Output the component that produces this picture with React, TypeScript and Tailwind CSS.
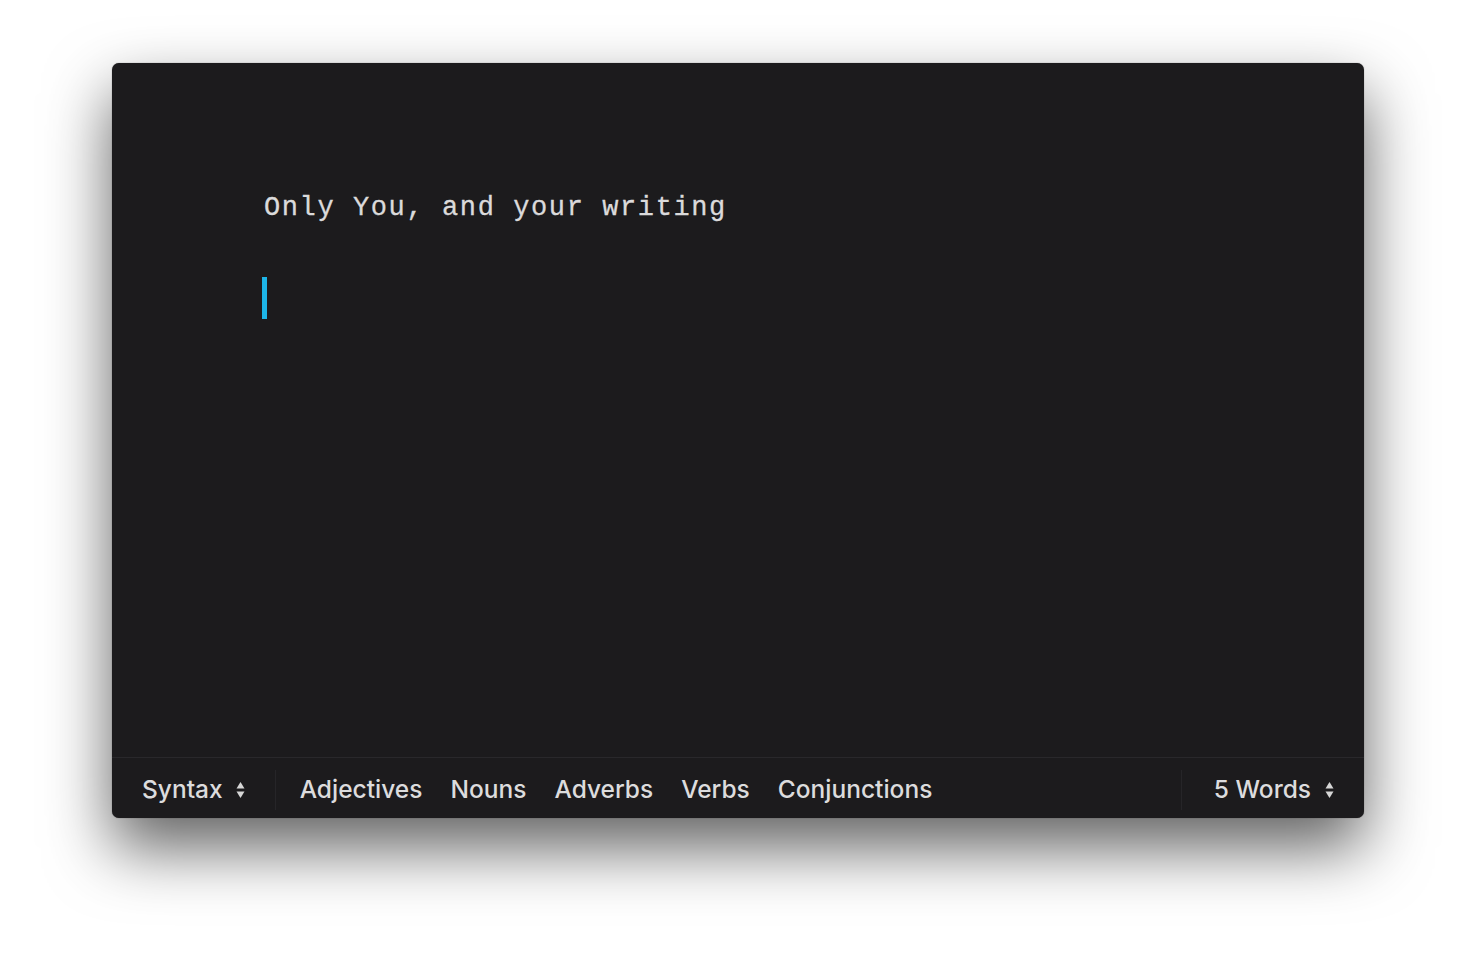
const mono = { fontFamily: '"Liberation Mono", "DejaVu Sans Mono", monospace' };

function UpDown() {
  return (
    <svg width="9" height="18" viewBox="0 0 9 18" className="fill-[#d6d6d6]">
      <path d="M4.5 1 L8.5 7.5 L0.5 7.5 Z" />
      <path d="M4.5 17 L8.5 10.5 L0.5 10.5 Z" />
    </svg>
  );
}

export default function App() {
  const tags = ["Adjectives", "Nouns", "Adverbs", "Verbs", "Conjunctions"];
  return (
    <div className="w-[1476px] h-[978px] bg-white flex justify-center pt-[63px]">
      <div className="w-[1252px] h-[755px] rounded-[7px] bg-[#1c1b1d] flex flex-col overflow-hidden shadow-[0_30px_65px_rgba(0,0,0,0.62),0_0_1px_rgba(0,0,0,0.6)]">
        {/* EDITOR */}
        <div className="flex-1 pl-[152px] pt-[125px]" style={mono}>
          <div className="text-[27px] leading-[40px] tracking-[1.6px] text-[#dbdadb] [-webkit-text-stroke:0.3px_#dbdadb]">
            Only You, and your writing
          </div>
          <div className="mt-[49px] ml-[-2px] w-[5px] h-[42px] bg-[#1db5e8]"></div>
        </div>

        {/* BOTTOM BAR */}
        <div
          className="h-[61px] pt-[3px] border-t border-[#29282b] flex items-center text-[24.5px] font-medium text-[#dcdcdd]"
          style={{ fontFamily: 'Inter, "Liberation Sans", sans-serif' }}
        >
          <div className="flex items-center gap-[13px] pl-[30px] pr-[30px] h-[40px] border-r border-[#262528]">
            <span>Syntax</span>
            <UpDown />
          </div>
          <div className="flex items-center gap-[28px] pl-[24px]">
            {tags.map((t) => (
              <span key={t}>{t}</span>
            ))}
          </div>
          <div className="ml-auto flex items-center gap-[14px] pl-[32px] pr-[30px] h-[40px] border-l border-[#262528]">
            <span>5 Words</span>
            <UpDown />
          </div>
        </div>
      </div>
    </div>
  );
}
